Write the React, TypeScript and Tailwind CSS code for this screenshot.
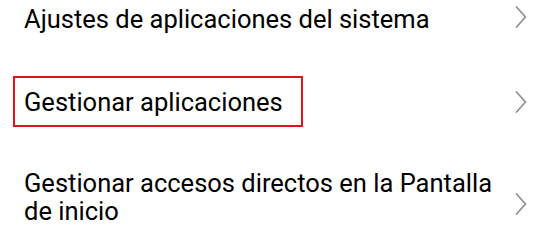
import React from "react";

function Chevron() {
  return (
    <svg width="12" height="22" viewBox="0 0 12 22" className="shrink-0">
      <polyline
        points="1.5,1 10.5,11 1.5,21"
        fill="none"
        stroke="#8e8e8e"
        strokeWidth="1.7"
        strokeLinecap="round"
        strokeLinejoin="round"
      />
    </svg>
  );
}

export default function App() {
  return (
    <div
      className="w-[550px] h-[230px] bg-white overflow-hidden flex flex-col pt-[5px] text-[25.5px] leading-[28px] text-black"
      style={{ fontFamily: "Roboto, 'Noto Sans', sans-serif" }}
    >
      <div className="flex items-start pl-[24px] pr-[23px]">
        <div className="flex-1">Ajustes de aplicaciones del sistema</div>
        <div className="mt-[1px]">
          <Chevron />
        </div>
      </div>

      <div className="flex items-start pl-[13px] pr-[23px] mt-[43px]">
        <div className="w-[290px] h-[51px] border-2 border-[#e5101c] pl-[9px] pt-[10px]">
          Gestionar aplicaciones
        </div>
        <div className="flex-1" />
        <div className="mt-[15px]">
          <Chevron />
        </div>
      </div>

      <div className="flex items-start pl-[24px] pr-[23px] mt-[42px]">
        <div className="w-[480px]">Gestionar accesos directos en la Pantalla de inicio</div>
        <div className="flex-1" />
        <div className="mt-[24px]">
          <Chevron />
        </div>
      </div>
    </div>
  );
}
